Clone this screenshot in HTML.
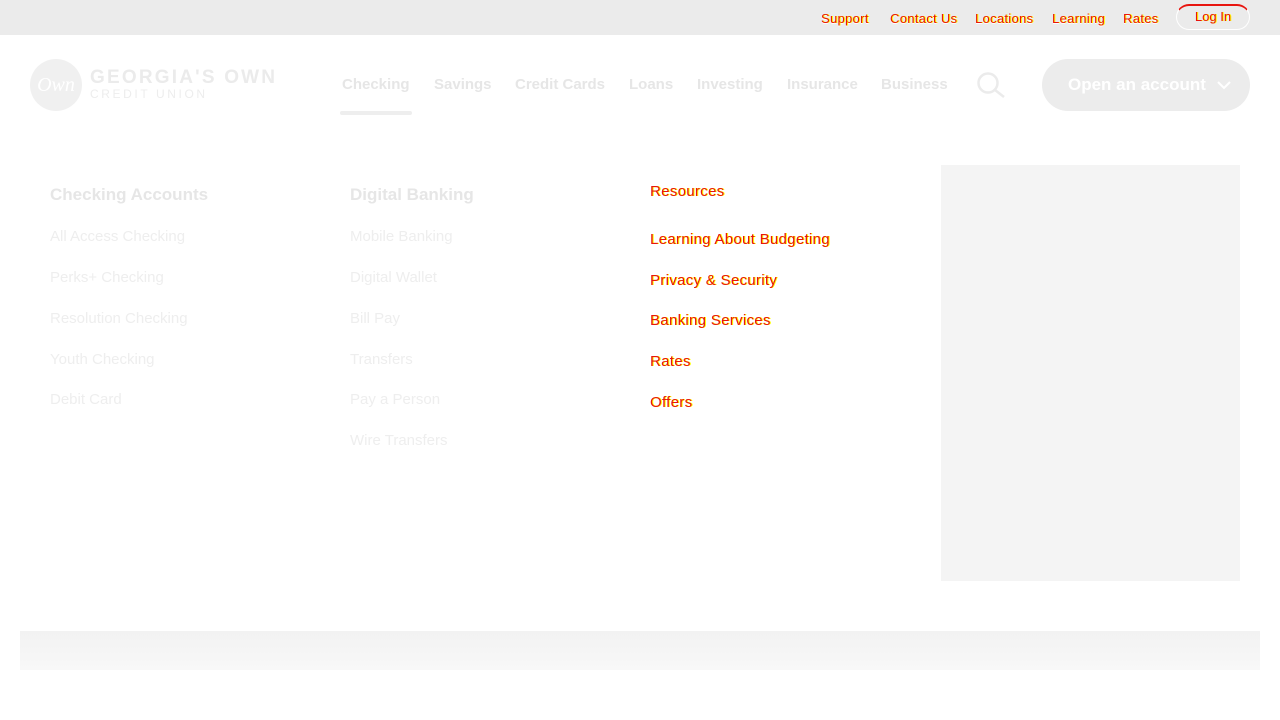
<!DOCTYPE html>
<html><head><meta charset="utf-8"><style>
*{margin:0;padding:0;box-sizing:border-box}
body{width:1280px;height:720px;background:#fff;font-family:"Liberation Sans",sans-serif;position:relative;overflow:hidden}
.top{position:absolute;left:0;top:0;width:1280px;height:35px;background:#ebebeb}
.art{color:#e8150f;text-shadow:1px 0 0 #ff0,0 1px 0 #fff;font-size:13px;position:absolute;top:11px;letter-spacing:0.3px}
.login{position:absolute;left:1176px;top:4px;width:74px;height:26px;border:1px solid #fff;border-top:2px solid #e8150f;border-radius:13px;text-align:center;font-size:13px;line-height:22px;color:#e8150f;text-shadow:1px 0 0 #ff0}
.nav{position:absolute;top:76px;font-size:15px;font-weight:bold;color:#e6e6e6}
.a{position:absolute;color:#eee;font-size:15px}
.h{position:absolute;color:#e6e6e6;font-size:17px;font-weight:bold}
</style></head><body>
<div class="top"></div>
<span class="art" style="left:821px">Support</span>
<span class="art" style="left:890px">Contact Us</span>
<span class="art" style="left:975px">Locations</span>
<span class="art" style="left:1052px">Learning</span>
<span class="art" style="left:1123px">Rates</span>
<div class="login">Log In</div>

<div style="position:absolute;left:30px;top:59px;width:52px;height:52px;border-radius:50%;background:#f0f0f0;color:#fff;font-family:'Liberation Serif',serif;font-style:italic;font-size:20px;text-align:center;line-height:52px">Own</div>
<div style="position:absolute;left:90px;top:67px;color:#ebebeb;font-size:19px;font-weight:bold;letter-spacing:2.2px">GEORGIA'S OWN</div>
<div style="position:absolute;left:90px;top:87px;color:#ededed;font-size:12px;letter-spacing:2.6px">CREDIT UNION</div>

<span class="nav" style="left:342px">Checking</span>
<div style="position:absolute;left:340px;top:111px;width:72px;height:4px;border-radius:2px;background:#eee"></div>
<span class="nav" style="left:434px">Savings</span>
<span class="nav" style="left:515px">Credit Cards</span>
<span class="nav" style="left:629px">Loans</span>
<span class="nav" style="left:697px">Investing</span>
<span class="nav" style="left:787px">Insurance</span>
<span class="nav" style="left:881px">Business</span>
<svg style="position:absolute;left:976px;top:71px" width="32" height="28" viewBox="0 0 32 28"><circle cx="12" cy="12" r="9.5" fill="none" stroke="#ebebeb" stroke-width="2.5"/><line x1="19" y1="19" x2="28" y2="26" stroke="#ebebeb" stroke-width="2.5"/></svg>
<div style="position:absolute;left:1042px;top:59px;width:208px;height:52px;border-radius:26px;background:#ececec;color:#fff;font-size:17px;font-weight:bold;line-height:52px;padding-left:26px">Open an account</div>
<svg style="position:absolute;left:1216px;top:79px" width="16" height="12" viewBox="0 0 16 12"><path d="M2 3l6 6 6-6" fill="none" stroke="#fff" stroke-width="2"/></svg>

<div class="h" style="left:50px;top:185px">Checking Accounts</div>
<div class="a" style="left:50px;top:228px">All Access Checking</div>
<div class="a" style="left:50px;top:269px">Perks+ Checking</div>
<div class="a" style="left:50px;top:310px">Resolution Checking</div>
<div class="a" style="left:50px;top:351px">Youth Checking</div>
<div class="a" style="left:50px;top:391px">Debit Card</div>

<div class="h" style="left:350px;top:185px">Digital Banking</div>
<div class="a" style="left:350px;top:228px">Mobile Banking</div>
<div class="a" style="left:350px;top:269px">Digital Wallet</div>
<div class="a" style="left:350px;top:310px">Bill Pay</div>
<div class="a" style="left:350px;top:351px">Transfers</div>
<div class="a" style="left:350px;top:391px">Pay a Person</div>
<div class="a" style="left:350px;top:432px">Wire Transfers</div>

<span class="art" style="left:650px;top:183px;font-size:15px">Resources</span>
<span class="art" style="left:650px;top:231px;font-size:15px">Learning About Budgeting</span>
<span class="art" style="left:650px;top:272px;font-size:15px">Privacy &amp; Security</span>
<span class="art" style="left:650px;top:312px;font-size:15px">Banking Services</span>
<span class="art" style="left:650px;top:353px;font-size:15px">Rates</span>
<span class="art" style="left:650px;top:394px;font-size:15px">Offers</span>

<div style="position:absolute;left:941px;top:165px;width:299px;height:416px;background:#f4f4f4"></div>
<div style="position:absolute;left:20px;top:631px;width:1240px;height:39px;background:linear-gradient(#f2f2f2,#f8f8f8)"></div>
</body></html>
